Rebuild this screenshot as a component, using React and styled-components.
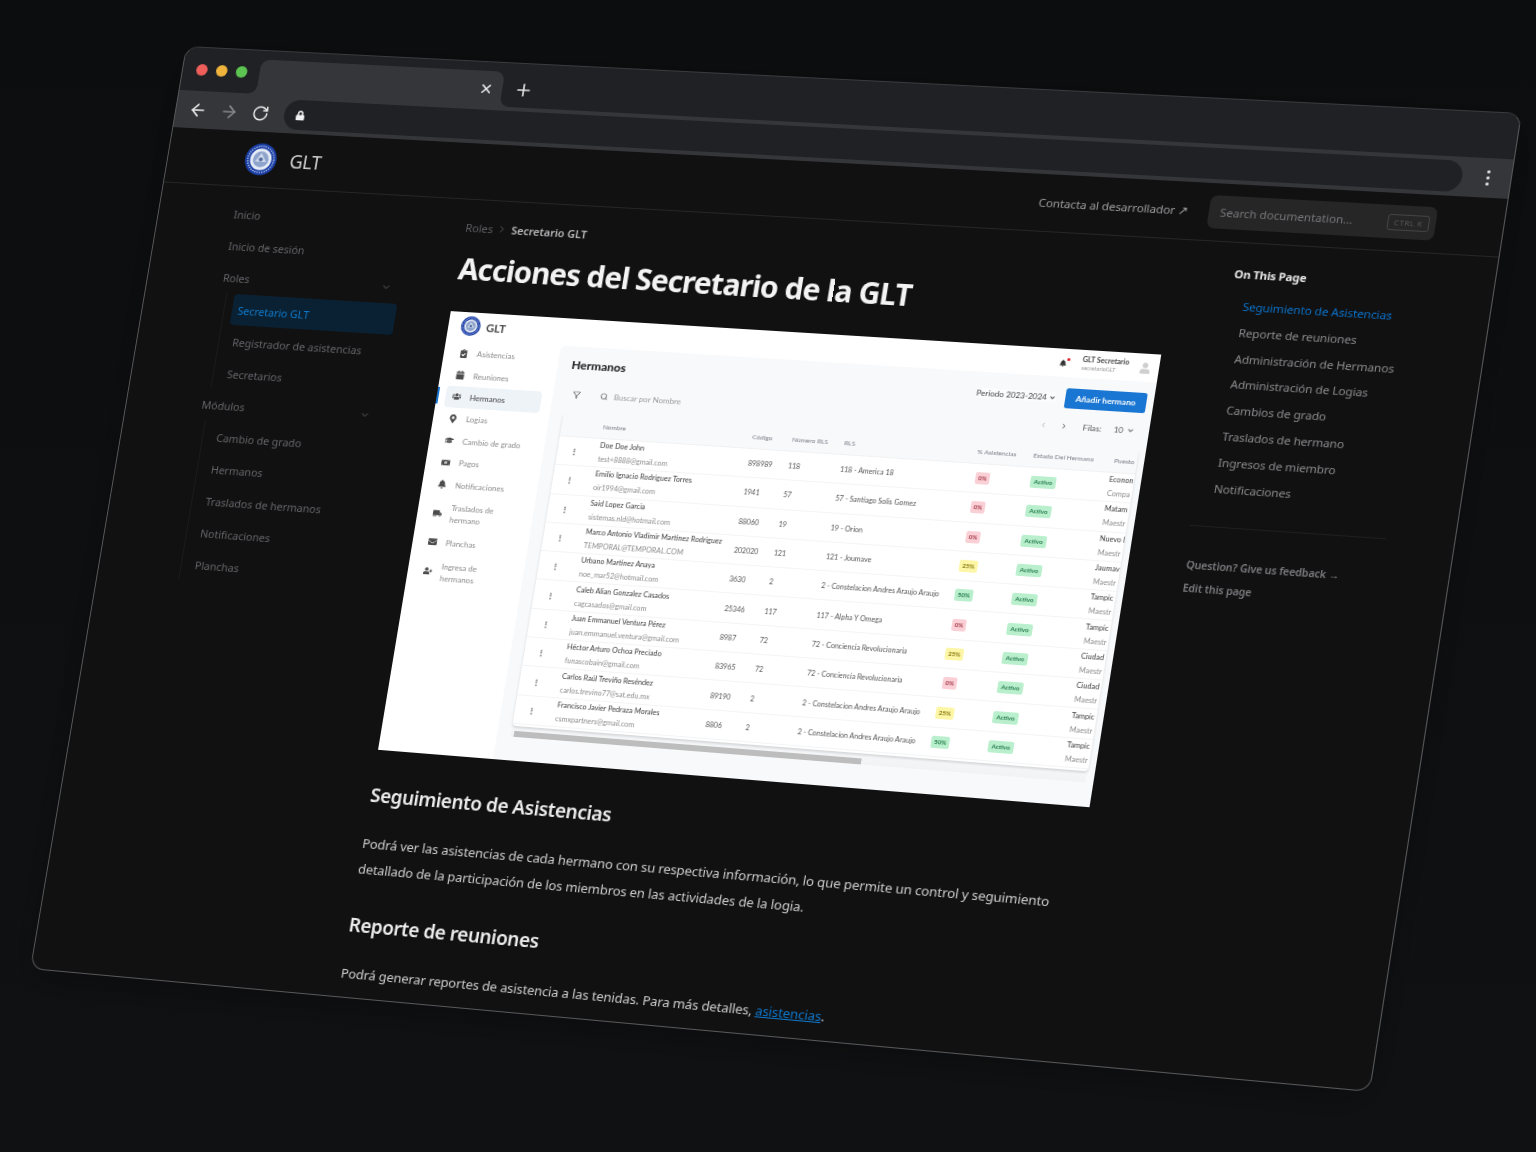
import React from "react";
import styled, { createGlobalStyle } from "styled-components";
import { FaClipboardCheck, FaCalendar, FaUsers, FaMapMarkerAlt, FaGraduationCap, FaMoneyBillAlt, FaBell, FaTruckMoving, FaEnvelope, FaUserPlus, FaUser, FaLock } from "react-icons/fa";
import { ArrowLeft, ArrowRight, RotateCw, X, Plus, ChevronDown, ChevronRight, ChevronLeft, Search, Filter } from "lucide-react";

const WIN_W = 1340;
const WIN_H = 960;

// maps the flat window onto the tilted quad seen in the picture
const quadMatrix = (w, h, [x0, y0], [x1, y1], [x2, y2], [x3, y3]) => {
  const dx1 = x1 - x2, dx2 = x3 - x2, sx = x0 - x1 + x2 - x3;
  const dy1 = y1 - y2, dy2 = y3 - y2, sy = y0 - y1 + y2 - y3;
  const den = dx1 * dy2 - dx2 * dy1;
  const g = (sx * dy2 - dx2 * sy) / den;
  const k = (dx1 * sy - sx * dy1) / den;
  const a = x1 - x0 + g * x1, b = x3 - x0 + k * x3;
  const d = y1 - y0 + g * y1, e = y3 - y0 + k * y3;
  return [a / w, d / w, 0, g / w, b / h, e / h, 0, k / h, 0, 0, 1, 0, x0, y0, 0, 1].join(",");
};

const TILT = quadMatrix(WIN_W, WIN_H, [186, 46], [1522, 113], [1370, 1092], [30, 969]);

const GlobalStyle = createGlobalStyle`
  html, body { margin: 0; padding: 0; background: #0f1011; }
  * { box-sizing: border-box; }
`;

const Scene = styled.div`
  position: relative;
  width: 1536px;
  height: 1152px;
  overflow: hidden;
  background: linear-gradient(#0c0d0f, #101112);
`;

const BrowserWindow = styled.div`
  position: absolute;
  left: 0;
  top: 0;
  width: ${WIN_W}px;
  height: ${WIN_H}px;
  transform-origin: 0 0;
  transform: matrix3d(${TILT});
  display: flex;
  flex-direction: column;
  background: #111112;
  border: 1px solid #59595b;
  border-top-color: #3a3b3e;
  border-radius: 14px;
  overflow: hidden;
  font-family: "Noto Sans", "Open Sans", sans-serif;
  box-shadow: 0 10px 40px rgba(0, 0, 0, 0.3);
`;

/* ---------- browser chrome ---------- */
const TabStrip = styled.div`
  height: 45px;
  flex: none;
  display: flex;
  align-items: flex-end;
  background: #1f2124;
  padding-left: 81px;
`;

const Lights = styled.div`
  position: absolute;
  left: 14px;
  top: 17px;
  display: flex;
  gap: 9px;
`;

const Light = styled.span`
  width: 12px;
  height: 12px;
  border-radius: 50%;
  background: ${(p) => p.$color};
`;

const Tab = styled.div`
  position: relative;
  width: 254px;
  height: 36px;
  background: #35363a;
  border-radius: 9px 9px 0 0;
  display: flex;
  align-items: center;
  justify-content: flex-end;
  padding-right: 9px;
  color: #f1f1f1;

  &::before,
  &::after {
    content: "";
    position: absolute;
    bottom: 0;
    width: 9px;
    height: 9px;
  }
  &::before {
    left: -9px;
    background: radial-gradient(circle at 0 0, #1f2124 8.5px, #35363a 9px);
  }
  &::after {
    right: -9px;
    background: radial-gradient(circle at 100% 0, #1f2124 8.5px, #35363a 9px);
  }
`;

const NewTab = styled.div`
  margin-left: 12px;
  height: 36px;
  display: flex;
  align-items: center;
  color: #e6e6e6;
`;

const Toolbar = styled.div`
  height: 39px;
  flex: none;
  display: flex;
  align-items: center;
  background: #35363a;
  padding: 0 14px 0 13px;
  color: #f1f1f1;
`;

const NavIcon = styled.span`
  display: flex;
  width: ${(p) => p.$w}px;
  color: ${(p) => (p.$dim ? "#8a8b8e" : "#f1f1f1")};
`;

const AddressBar = styled.div`
  flex: 1;
  height: 31px;
  margin-left: 3px;
  border-radius: 16px;
  background: #202124;
  display: flex;
  align-items: center;
  padding-left: 12px;
  color: #f1f1f1;
`;

const MoreDots = styled.div`
  width: 32px;
  display: flex;
  flex-direction: column;
  align-items: flex-end;
  gap: 2.5px;
  padding-right: 6px;
  span {
    width: 3.5px;
    height: 3.5px;
    border-radius: 50%;
    background: #eee;
  }
`;

/* ---------- docs page ---------- */
const SiteHeader = styled.header`
  height: 58px;
  flex: none;
  display: flex;
  align-items: center;
  border-bottom: 1px solid #262627;
  padding: 0 64px 0 81px;
`;

const BrandName = styled.span`
  margin-left: 14px;
  font-size: 19px;
  color: #d2d2d2;
  letter-spacing: -0.02em;
`;

const ContactLink = styled.span`
  margin-left: auto;
  font-size: 11.5px;
  color: #9d9d9f;
  letter-spacing: -0.01em;
`;

const SearchBox = styled.div`
  margin-left: 20px;
  width: 218px;
  height: 33px;
  border-radius: 7px;
  background: #262627;
  display: flex;
  align-items: center;
  justify-content: space-between;
  padding: 0 6px 0 11px;
  font-size: 11.2px;
  color: #77777a;
`;

const Kbd = styled.span`
  border: 1px solid #444446;
  border-radius: 3px;
  padding: 2px 5px;
  font-size: 7.5px;
  letter-spacing: 0.08em;
  color: #58585a;
`;

const PageBody = styled.div`
  flex: 1;
  display: grid;
  grid-template-columns: 320px 713px 1fr;
`;

const SideNav = styled.nav`
  padding: 12px 56px 0 71px;
  display: flex;
  flex-direction: column;
  gap: 1px;
`;

const NavRow = styled.div`
  height: 32px;
  display: flex;
  align-items: center;
  justify-content: space-between;
  padding: 0 9px 0 8px;
  font-size: 11px;
  color: #66666a;
`;

const NavGroup = styled.div`
  margin: 0 0 0 14px;
  padding-left: 8px;
  border-left: 1px solid #1b1b1c;
  display: flex;
  flex-direction: column;
  gap: 1px;
`;

const NavChild = styled.div`
  height: 32px;
  display: flex;
  align-items: center;
  padding-left: 6px;
  border-radius: 4px;
  font-size: 11px;
  color: ${(p) => (p.$active ? "#0f7ccf" : "#66666a")};
  background: ${(p) => (p.$active ? "#0a2133" : "transparent")};
`;

const Article = styled.main`
  min-width: 0;
`;

const Breadcrumb = styled.div`
  height: 16px;
  margin: 20px 0 0 1px;
  display: flex;
  align-items: center;
  gap: 4px;
  font-size: 11.2px;
  color: #5d5d60;
  b {
    color: #b9b9bb;
    font-weight: 600;
    font-size: 11px;
  }
`;

const Title = styled.h1`
  margin: 15px 0 0 1px;
  height: 39px;
  line-height: 39px;
  font-size: 30px;
  font-weight: 700;
  letter-spacing: -0.03em;
  color: #f3f3f3;
  white-space: nowrap;
`;

const SectionTitle = styled.h2`
  margin: ${(p) => p.$top}px 0 0;
  height: 28px;
  line-height: 28px;
  font-size: 19.2px;
  font-weight: 600;
  letter-spacing: -0.02em;
  color: #ececec;
`;

const Para = styled.p`
  margin: ${(p) => p.$top}px 0 0;
  font-size: 13.1px;
  line-height: 26px;
  color: #cdcdcd;
  letter-spacing: -0.01em;
  a {
    color: #0f78cc;
    text-decoration: underline;
  }
`;

const Toc = styled.aside`
  padding: 23px 0 0 57px;
  font-size: 11.4px;
`;

const TocTitle = styled.div`
  height: 16px;
  line-height: 16px;
  font-size: 11.2px;
  font-weight: 700;
  color: #e4e4e4;
  letter-spacing: -0.02em;
`;

const TocList = styled.div`
  margin-top: 11px;
  padding-left: 13px;
  display: flex;
  flex-direction: column;
`;

const TocItem = styled.div`
  height: 25.8px;
  line-height: 25.8px;
  white-space: nowrap;
  letter-spacing: -0.01em;
  color: ${(p) => (p.$active ? "#0b72c8" : "#8c8c8e")};
`;

const TocRule = styled.div`
  margin: 25px 0 0 -5px;
  width: 188px;
  border-top: 1px solid #1f1f20;
`;

const TocLink = styled.div`
  height: 23px;
  line-height: 23px;
  margin: ${(p) => p.$top || 0}px 0 0 -2px;
  font-size: 10.2px;
  font-weight: 600;
  color: #7d7d80;
  letter-spacing: -0.01em;
`;

/* ---------- the screenshot inside the page ---------- */
const Shot = styled.div`
  width: 712px;
  height: 450px;
  margin-top: 25px;
  background: #fff;
  overflow: hidden;
  display: grid;
  grid-template-columns: 118px 1fr;
  font-family: "Lato", "Noto Sans", sans-serif;
  filter: blur(0.5px);
`;

const AppSide = styled.div`
  position: relative;
  display: flex;
  flex-direction: column;
`;

const AppBrand = styled.div`
  height: 28px;
  display: flex;
  align-items: center;
  gap: 6px;
  padding-left: 13px;
  margin-bottom: 3px;
  font-size: 11.5px;
  font-weight: 700;
  color: #4a4a4a;
`;

const AppItem = styled.div`
  position: relative;
  height: ${(p) => (p.$tall ? 37 : 22.4)}px;
  margin: 0 11px 0 9px;
  display: flex;
  align-items: center;
  border-radius: 4px;
  padding-left: 7px;
  gap: 9px;
  font-size: 8px;
  line-height: 12px;
  color: ${(p) => (p.$active ? "#3c3c3c" : "#8a8a8a")};
  background: ${(p) => (p.$active ? "#eef3f8" : "transparent")};
  svg {
    flex: none;
    width: 9px;
    height: 9px;
    color: #4c4c4c;
  }
  span {
    max-width: ${(p) => (p.$tall ? "56px" : "none")};
    white-space: ${(p) => (p.$tall ? "normal" : "nowrap")};
  }
  ${(p) =>
    p.$active &&
    `&::before {
      content: "";
      position: absolute;
      left: -9px;
      top: 2px;
      width: 1.5px;
      height: 17px;
      background: #1976d2;
    }`}
`;

const AppMain = styled.div`
  display: flex;
  flex-direction: column;
  min-width: 0;
`;

const AppTopBar = styled.div`
  height: 28px;
  flex: none;
  display: flex;
  align-items: center;
  justify-content: flex-end;
  padding-right: 8px;
`;

const BellWrap = styled.div`
  position: relative;
  margin-right: 15px;
  display: flex;
  color: #333;
  &::after {
    content: "";
    position: absolute;
    right: -3px;
    top: -2px;
    width: 3px;
    height: 3px;
    border-radius: 50%;
    background: #e01e2b;
  }
`;

const UserInfo = styled.div`
  width: 56px;
  font-size: 7px;
  line-height: 9px;
  font-weight: 700;
  color: #444;
  small {
    display: block;
    font-size: 5.5px;
    font-weight: 400;
    color: #999;
  }
`;

const Avatar = styled.div`
  display: flex;
  color: #cfcfcf;
`;

const Panel = styled.div`
  flex: 1;
  min-height: 0;
  background: #f7f9fb;
  border-radius: 6px 0 0 0;
  padding: 11px 7px 0 14px;
  display: flex;
  flex-direction: column;
`;

const PanelHead = styled.div`
  height: 20px;
  flex: none;
  display: flex;
  align-items: center;
  justify-content: space-between;
`;

const PanelTitle = styled.div`
  margin-bottom: 6px;
  font-size: 12px;
  font-weight: 900;
  color: #2b2b2b;
`;

const HeadActions = styled.div`
  display: flex;
  align-items: center;
  gap: 9px;
`;

const PeriodSelect = styled.div`
  display: flex;
  align-items: center;
  gap: 2px;
  background: #fbfcfd;
  font-size: 8px;
  color: #444;
  svg {
    width: 7px;
    height: 7px;
  }
`;

const AddButton = styled.div`
  width: 79px;
  height: 20px;
  border-radius: 2.5px;
  background: #1976d2;
  color: #fff;
  font-size: 8.2px;
  font-weight: 700;
  display: flex;
  align-items: center;
  justify-content: center;
`;

const FilterRow = styled.div`
  height: 20px;
  flex: none;
  margin-top: 8px;
  display: flex;
  align-items: center;
  padding: 0 7px 0 6px;
  font-size: 8px;
  color: #9b9b9b;
  svg {
    flex: none;
    width: 8px;
    height: 8px;
    color: #555;
  }
`;

const SearchGlyph = styled.span`
  display: flex;
  margin-left: 20px;
`;

const SearchHint = styled.span`
  margin: 0 auto 0 6px;
`;

const PagerBtn = styled.span`
  display: flex;
  margin-right: ${(p) => (p.$dim ? 12 : 15)}px;
  svg {
    color: ${(p) => (p.$dim ? "#bbb" : "#555")};
  }
`;

const RowsLabel = styled.span`
  color: #555;
  font-size: 8.2px;
  margin-right: 12px;
`;

const RowsValue = styled.span`
  color: #555;
  font-size: 8px;
  margin-right: 3px;
`;

const Card = styled.div`
  height: 320px;
  flex: none;
  margin-top: 8px;
  background: #fff;
  border-radius: 4px;
  box-shadow: 0 2px 3px rgba(0, 0, 0, 0.14);
  overflow: hidden;
`;

const HeadRow = styled.div`
  height: 25px;
  display: grid;
  grid-template-columns: 42px 151px 40px 52px 132px 55px 79px 1fr;
  align-items: center;
  font-size: 6.5px;
  color: #7b7b88;
  white-space: nowrap;
  background: #f7f9fb;
  border-bottom: 1px solid #eff1f3;
`;

const DataRow = styled.div`
  height: 29.3px;
  display: grid;
  grid-template-columns: 42px 151px 40px 52px 128px 26px 93px 1fr;
  align-items: center;
  font-size: 7px;
  color: #555;
  white-space: nowrap;
  border-bottom: 1px solid #f3f4f5;
`;

const Kebab = styled.span`
  justify-self: center;
  padding-right: 8px;
  font-size: 8px;
  font-weight: 700;
  color: #555;
`;

const TwoLine = styled.div`
  line-height: 14px;
  font-size: 7.2px;
  color: #3a3a3a;
  padding-left: ${(p) => p.$pad || 0}px;
  small {
    display: block;
    font-size: 7.2px;
    color: #8c8c8c;
  }
`;

const Pill = styled.span`
  justify-self: center;
  height: 12px;
  line-height: 12px;
  padding: 0 ${(p) => (p.$wide ? 4 : 3)}px;
  border-radius: 2px;
  font-size: 6.2px;
  font-weight: 700;
  background: ${(p) => p.$bg};
  color: ${(p) => p.$fg};
`;

const Scroller = styled.div`
  flex: none;
  margin: 4px 1px 0 0;
  height: 7px;
  display: flex;
  align-items: center;
  background: linear-gradient(#f3f5f6, #f0f2f3);
`;

const ScrollThumb = styled.div`
  margin-left: 3px;
  width: 349px;
  height: 6px;
  background: #bdbdbd;
`;

const pct = {
  "0%": ["#fad0d6", "#a33a48"],
  "25%": ["#fdf6a6", "#8a7a12"],
  "50%": ["#b9efcd", "#23794a"],
};

const people = [
  ["Doe Doe John", "test+8888@gmail.com", "898989", "118", "118 - America 18", "0%", "Econon", "Compa"],
  ["Emilio Ignacio Rodriguez Torres", "oir1994@gmail.com", "1941", "57", "57 - Santiago Solis Gomez", "0%", "Matam", "Maestr"],
  ["Said Lopez Garcia", "sistemas.nld@hotmail.com", "88060", "19", "19 - Orion", "0%", "Nuevo I", "Maestr"],
  ["Marco Antonio Vladimir Martinez Rodriguez", "TEMPORAL@TEMPORAL.COM", "202020", "121", "121 - Joumave", "25%", "Jaumav", "Maestr"],
  ["Urbano Martinez Anaya", "noe_mar52@hotmail.com", "3630", "2", "2 - Constelacion Andres Araujo Araujo", "50%", "Tampic", "Maestr"],
  ["Caleb Alian Gonzalez Casados", "cagcasados@gmail.com", "25346", "117", "117 - Alpha Y Omega", "0%", "Tampic", "Maestr"],
  ["Juan Emmanuel Ventura Pérez", "juan.emmanuel.ventura@gmail.com", "8987", "72", "72 - Conciencia Revolucionaria", "25%", "Ciudad", "Maestr"],
  ["Héctor Arturo Ochoa Preciado", "funascobain@gmail.com", "83965", "72", "72 - Conciencia Revolucionaria", "0%", "Ciudad", "Maestr"],
  ["Carlos Raúl Treviño Reséndez", "carlos.trevino77@sat.edu.mx", "89190", "2", "2 - Constelacion Andres Araujo Araujo", "25%", "Tampic", "Maestr"],
  ["Francisco Javier Pedraza Morales", "csmxpartners@gmail.com", "8806", "2", "2 - Constelacion Andres Araujo Araujo", "50%", "Tampic", "Maestr"],
];

const appMenu = [
  [FaClipboardCheck, "Asistencias"],
  [FaCalendar, "Reuniones"],
  [FaUsers, "Hermanos", true],
  [FaMapMarkerAlt, "Logias"],
  [FaGraduationCap, "Cambio de grado"],
  [FaMoneyBillAlt, "Pagos"],
  [FaBell, "Notificaciones"],
  [FaTruckMoving, "Traslados de hermano", false, true],
  [FaEnvelope, "Planchas"],
  [FaUserPlus, "Ingresa de hermanos", false, true],
];

const Logo = ({ size }) => (
  <svg width={size} height={size} viewBox="0 0 40 40">
    <circle cx="20" cy="20" r="20" fill="#1b3fa6" />
    <circle cx="20" cy="20" r="16.5" fill="none" stroke="#c9d3ee" strokeWidth="1.6" strokeDasharray="1.5 1.5" />
    <circle cx="20" cy="20" r="13.5" fill="#e6ecf6" />
    <circle cx="20" cy="20" r="10" fill="#8fa4cc" />
    <path d="M20 12l7 11H13z" fill="#dfe6f3" opacity="0.8" />
    <circle cx="20" cy="20" r="2.5" fill="#51699c" />
  </svg>
);

const InnerApp = () => (
  <Shot>
    <AppSide>
      <AppBrand>
        <Logo size={20} />
        GLT
      </AppBrand>
      {appMenu.map(([Icon, label, active, tall]) => (
        <AppItem key={label} $active={active} $tall={tall}>
          <Icon />
          <span>{label}</span>
        </AppItem>
      ))}
    </AppSide>
    <AppMain>
      <AppTopBar>
        <BellWrap>
          <FaBell size={7} />
        </BellWrap>
        <UserInfo>
          GLT Secretario
          <small>secretarioGLT</small>
        </UserInfo>
        <Avatar>
          <FaUser size={11} />
        </Avatar>
      </AppTopBar>
      <Panel>
        <PanelHead>
          <PanelTitle>Hermanos</PanelTitle>
          <HeadActions>
            <PeriodSelect>
              Periodo 2023-2024
              <ChevronDown strokeWidth={3} />
            </PeriodSelect>
            <AddButton>Añadir hermano</AddButton>
          </HeadActions>
        </PanelHead>
        <FilterRow>
          <Filter />
          <SearchGlyph>
            <Search />
          </SearchGlyph>
          <SearchHint>Buscar por Nombre</SearchHint>
          <PagerBtn $dim>
            <ChevronLeft />
          </PagerBtn>
          <PagerBtn>
            <ChevronRight />
          </PagerBtn>
          <RowsLabel>Filas:</RowsLabel>
          <RowsValue>10</RowsValue>
          <ChevronDown strokeWidth={3} />
        </FilterRow>
        <Card>
          <HeadRow>
            <span />
            <span>Nombre</span>
            <span>Código</span>
            <span>Número RLS</span>
            <span>RLS</span>
            <span>% Asistencias</span>
            <span>Estado Del Hermano</span>
            <span>Puesto</span>
          </HeadRow>
          {people.map((r) => (
            <DataRow key={r[1]}>
              <Kebab>⋮</Kebab>
              <TwoLine>
                {r[0]}
                <small>{r[1]}</small>
              </TwoLine>
              <span>{r[2]}</span>
              <span>{r[3]}</span>
              <span>{r[4]}</span>
              <Pill $bg={pct[r[5]][0]} $fg={pct[r[5]][1]}>
                {r[5]}
              </Pill>
              <Pill $wide $bg="#b9efcd" $fg="#23794a">
                Activo
              </Pill>
              <TwoLine $pad={17}>
                {r[6]}
                <small>{r[7]}</small>
              </TwoLine>
            </DataRow>
          ))}
        </Card>
        <Scroller>
          <ScrollThumb />
        </Scroller>
      </Panel>
    </AppMain>
  </Shot>
);

const toc = ["Reporte de reuniones", "Administración de Hermanos", "Administración de Logias", "Cambios de grado", "Traslados de hermano", "Ingresos de miembro", "Notificaciones"];

export default function App() {
  return (
    <Scene>
      <GlobalStyle />
      <BrowserWindow>
        <TabStrip>
          <Lights>
            <Light $color="#ee5f5b" />
            <Light $color="#f0b33c" />
            <Light $color="#5cc552" />
          </Lights>
          <Tab>
            <X size={15} strokeWidth={2.5} />
          </Tab>
          <NewTab>
            <Plus size={20} strokeWidth={2} />
          </NewTab>
        </TabStrip>
        <Toolbar>
          <NavIcon $w={33}>
            <ArrowLeft size={20} />
          </NavIcon>
          <NavIcon $w={34} $dim>
            <ArrowRight size={20} />
          </NavIcon>
          <NavIcon $w={31}>
            <RotateCw size={18} />
          </NavIcon>
          <AddressBar>
            <FaLock size={10} />
          </AddressBar>
          <MoreDots>
            <span />
            <span />
            <span />
          </MoreDots>
        </Toolbar>
        <SiteHeader>
          <Logo size={33} />
          <BrandName>GLT</BrandName>
          <ContactLink>Contacta al desarrollador ↗</ContactLink>
          <SearchBox>
            Search documentation...
            <Kbd>CTRL K</Kbd>
          </SearchBox>
        </SiteHeader>
        <PageBody>
          <SideNav>
            <NavRow>Inicio</NavRow>
            <NavRow>Inicio de sesión</NavRow>
            <NavRow>
              Roles
              <ChevronDown size={11} />
            </NavRow>
            <NavGroup>
              <NavChild $active>Secretario GLT</NavChild>
              <NavChild>Registrador de asistencias</NavChild>
              <NavChild>Secretarios</NavChild>
            </NavGroup>
            <NavRow>
              Módulos
              <ChevronDown size={11} />
            </NavRow>
            <NavGroup>
              <NavChild>Cambio de grado</NavChild>
              <NavChild>Hermanos</NavChild>
              <NavChild>Traslados de hermanos</NavChild>
              <NavChild>Notificaciones</NavChild>
              <NavChild>Planchas</NavChild>
            </NavGroup>
          </SideNav>
          <Article>
            <Breadcrumb>
              Roles
              <ChevronRight size={11} />
              <b>Secretario GLT</b>
            </Breadcrumb>
            <Title>Acciones del Secretario de la GLT</Title>
            <InnerApp />
            <SectionTitle $top={32}>Seguimiento de Asistencias</SectionTitle>
            <Para $top={22}>
              Podrá ver las asistencias de cada hermano con su respectiva información, lo que permite un control y seguimiento detallado de la participación de los miembros en las actividades de la logia.
            </Para>
            <SectionTitle $top={30}>Reporte de reuniones</SectionTitle>
            <Para $top={22}>
              Podrá generar reportes de asistencia a las tenidas. Para más detalles, <a>asistencias</a>.
            </Para>
          </Article>
          <Toc>
            <TocTitle>On This Page</TocTitle>
            <TocList>
              <TocItem $active>Seguimiento de Asistencias</TocItem>
              {toc.map((t) => (
                <TocItem key={t}>{t}</TocItem>
              ))}
            </TocList>
            <TocRule />
            <TocLink $top={27}>Question? Give us feedback →</TocLink>
            <TocLink>Edit this page</TocLink>
          </Toc>
        </PageBody>
      </BrowserWindow>
    </Scene>
  );
}
